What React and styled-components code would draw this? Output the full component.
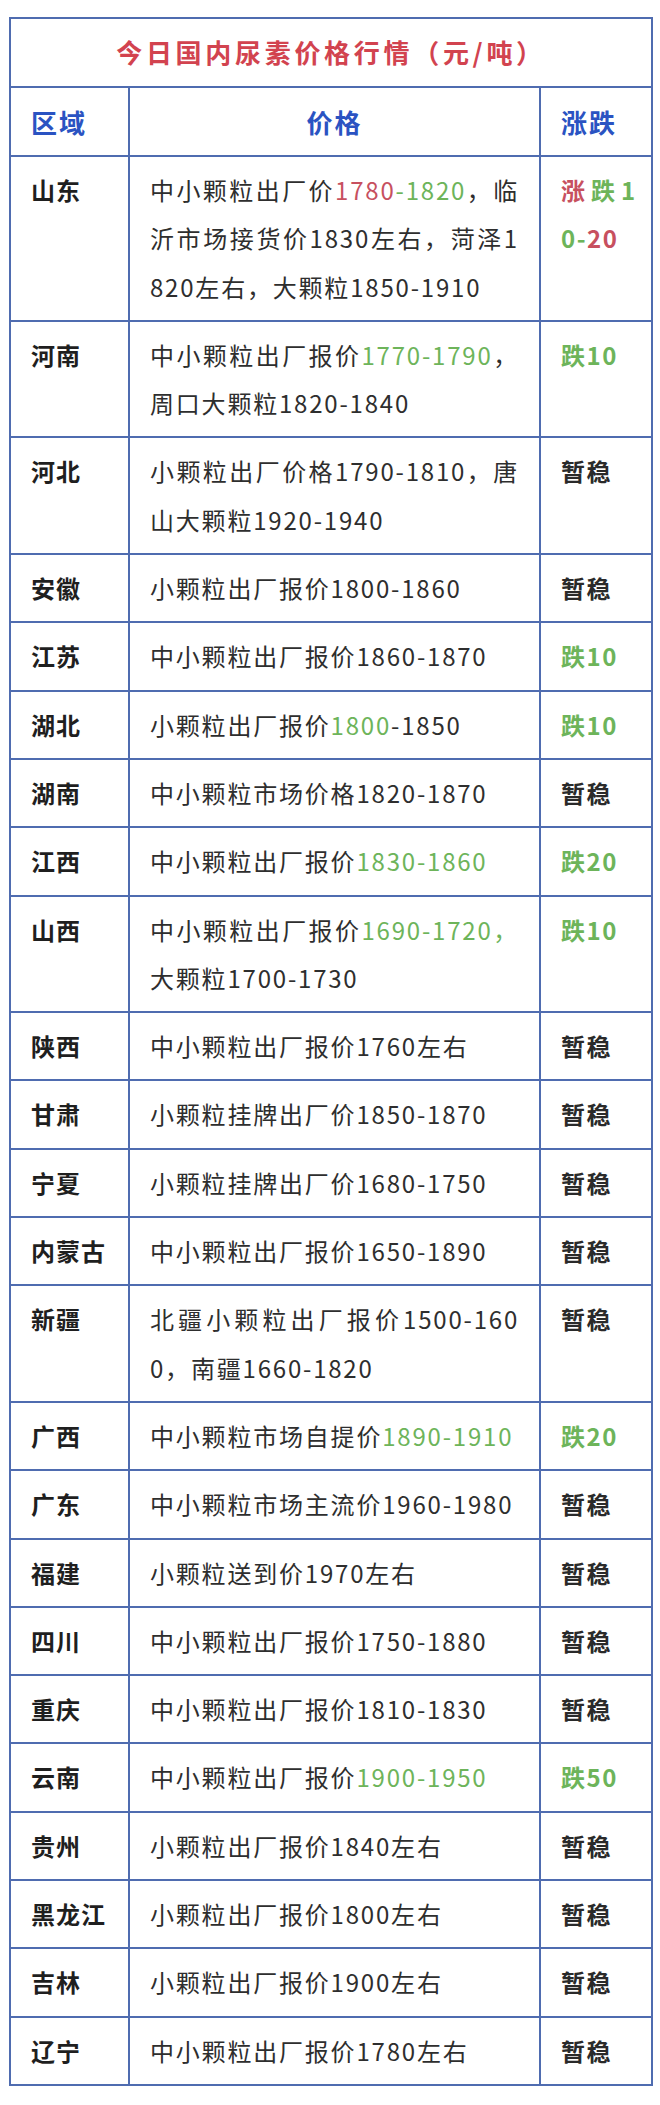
import styled, { createGlobalStyle } from "styled-components";

const GlobalStyle = createGlobalStyle`
  body {
    margin: 0;
    background: #fff;
    font-family: "Noto Sans CJK SC", "Noto Sans", sans-serif;
  }
`;

const RED = "#c7505f";
const GREEN = "#6db45a";

const STABLE = [["暂稳"]];

const rows = [
  {
    region: "山东",
    lines: [
      ["中小颗粒出厂价", ["1780", "red"], ["-1820", "green"], "，临"],
      ["沂市场接货价1830左右，菏泽1"],
      ["820左右，大颗粒1850-1910"],
    ],
    change: [
      { track: 6, segs: [["涨", "red"], ["跌1", "green"]] },
      [["0-", "green"], ["20", "red"]],
    ],
  },
  {
    region: "河南",
    lines: [["中小颗粒出厂报价", ["1770-1790", "green"], "，"], ["周口大颗粒1820-1840"]],
    change: [[["跌10", "green"]]],
  },
  {
    region: "河北",
    lines: [["小颗粒出厂价格1790-1810，唐"], ["山大颗粒1920-1940"]],
    change: STABLE,
  },
  { region: "安徽", lines: [["小颗粒出厂报价1800-1860"]], change: STABLE },
  { region: "江苏", lines: [["中小颗粒出厂报价1860-1870"]], change: [[["跌10", "green"]]] },
  {
    region: "湖北",
    lines: [["小颗粒出厂报价", ["1800", "green"], "-1850"]],
    change: [[["跌10", "green"]]],
  },
  { region: "湖南", lines: [["中小颗粒市场价格1820-1870"]], change: STABLE },
  {
    region: "江西",
    lines: [["中小颗粒出厂报价", ["1830-1860", "green"]]],
    change: [[["跌20", "green"]]],
  },
  {
    region: "山西",
    lines: [["中小颗粒出厂报价", ["1690-1720，", "green"]], ["大颗粒1700-1730"]],
    change: [[["跌10", "green"]]],
  },
  { region: "陕西", lines: [["中小颗粒出厂报价1760左右"]], change: STABLE },
  { region: "甘肃", lines: [["小颗粒挂牌出厂价1850-1870"]], change: STABLE },
  { region: "宁夏", lines: [["小颗粒挂牌出厂价1680-1750"]], change: STABLE },
  { region: "内蒙古", lines: [["中小颗粒出厂报价1650-1890"]], change: STABLE },
  {
    region: "新疆",
    lines: [["北疆小颗粒出厂报价1500-160"], ["0，南疆1660-1820"]],
    change: STABLE,
  },
  {
    region: "广西",
    lines: [["中小颗粒市场自提价", ["1890-1910", "green"]]],
    change: [[["跌20", "green"]]],
  },
  { region: "广东", lines: [["中小颗粒市场主流价1960-1980"]], change: STABLE },
  { region: "福建", lines: [["小颗粒送到价1970左右"]], change: STABLE },
  { region: "四川", lines: [["中小颗粒出厂报价1750-1880"]], change: STABLE },
  { region: "重庆", lines: [["中小颗粒出厂报价1810-1830"]], change: STABLE },
  {
    region: "云南",
    lines: [["中小颗粒出厂报价", ["1900-1950", "green"]]],
    change: [[["跌50", "green"]]],
  },
  { region: "贵州", lines: [["小颗粒出厂报价1840左右"]], change: STABLE },
  { region: "黑龙江", lines: [["小颗粒出厂报价1800左右"]], change: STABLE },
  { region: "吉林", lines: [["小颗粒出厂报价1900左右"]], change: STABLE },
  { region: "辽宁", lines: [["中小颗粒出厂报价1780左右"]], change: STABLE },
];

const renderSegments = (segs) =>
  segs.map((s, i) =>
    typeof s === "string" ? (
      <span key={i}>{s}</span>
    ) : s.length === 1 ? (
      <span key={i}>{s[0]}</span>
    ) : (
      <Tint key={i} $tone={s[1]}>
        {s[0]}
      </Tint>
    )
  );

const renderLines = (lines) =>
  lines.map((line, i) => {
    const segs = Array.isArray(line) ? line : line.segs;
    return (
      <Line key={i} $spread={i < lines.length - 1} $track={line.track}>
        {renderSegments(segs)}
      </Line>
    );
  });

const App = () => {
  return (
    <Wrapper>
      <GlobalStyle />
      <Table>
        <colgroup>
          <col style={{ width: 119 }} />
          <col style={{ width: 411 }} />
          <col style={{ width: 112 }} />
        </colgroup>
        <thead>
          <tr>
            <TitleCell colSpan={3}>今日国内尿素价格行情（元/吨）</TitleCell>
          </tr>
          <tr>
            <HeadCell>区域</HeadCell>
            <HeadCell $center>价格</HeadCell>
            <HeadCell>涨跌</HeadCell>
          </tr>
        </thead>
        <tbody>
          {rows.map((row) => (
            <tr key={row.region}>
              <RegionCell>{row.region}</RegionCell>
              <PriceCell>{renderLines(row.lines)}</PriceCell>
              <ChangeCell>{renderLines(row.change)}</ChangeCell>
            </tr>
          ))}
        </tbody>
      </Table>
    </Wrapper>
  );
};

const Wrapper = styled.div`
  padding: 17px 8px 20px 9px;
`;

const Table = styled.table`
  width: 642px;
  border-collapse: collapse;
  table-layout: fixed;

  td,
  th {
    border: 2px solid #4f6cb0;
    vertical-align: top;
    padding: 9px 20px;
    line-height: 48.3px;
  }
`;

const TitleCell = styled.th`
  && {
    padding: 9px 20px 10px;
    line-height: 48px;
  }
  text-align: center;
  font-size: 26px;
  font-weight: 700;
  letter-spacing: 3.7px;
  color: #d2434f;
`;

const HeadCell = styled.th`
  && {
    padding: 10px 20px 9px;
    line-height: 48px;
  }
  text-align: ${(p) => (p.$center ? "center" : "left")};
  font-size: 26px;
  font-weight: 700;
  letter-spacing: 2px;
  color: #2a53c2;
`;

const RegionCell = styled.td`
  font-size: 24px;
  font-weight: 700;
  letter-spacing: 1px;
  color: #1f1f1f;
  white-space: nowrap;
`;

const PriceCell = styled.td`
  font-size: 24px;
  font-weight: 400;
  letter-spacing: 1.8px;
  color: #2e2e2e;
`;

const Line = styled.div`
  text-align: ${(p) => (p.$spread ? "justify" : "left")};
  text-align-last: ${(p) => (p.$spread ? "justify" : "auto")};
  white-space: nowrap;
  ${(p) => (p.$track ? `letter-spacing: ${p.$track}px;` : "")}
`;

const ChangeCell = styled.td`
  font-size: 24px;
  font-weight: 700;
  letter-spacing: 1.5px;
  color: #2a2a2a;
`;

const Tint = styled.span`
  color: ${(p) => (p.$tone === "red" ? RED : GREEN)};
`;

export default App;
